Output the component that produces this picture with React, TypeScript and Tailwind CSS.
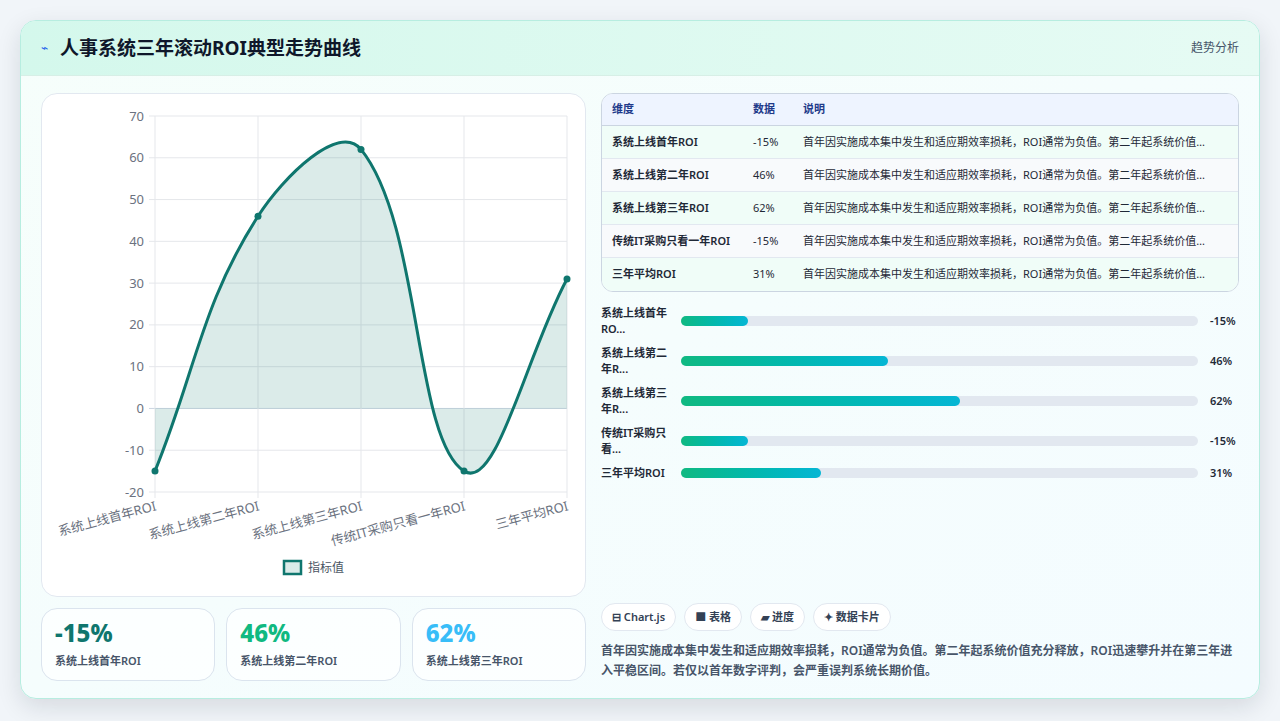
import React from "react";

const font = { fontFamily: '"Noto Sans", "Noto Sans CJK SC", sans-serif' };

const labels = ["系统上线首年ROI", "系统上线第二年ROI", "系统上线第三年ROI", "传统IT采购只看一年ROI", "三年平均ROI"];
const values = [-15, 46, 62, -15, 31];
const desc = "首年因实施成本集中发生和适应期效率损耗，ROI通常为负值。第二年起系统价值充分释放，ROI迅速攀升并在第三年进入平稳区间。";

const X0 = 153, X1 = 565, YT = 115, YB = 491;
const yOf = (v: number) => YT + ((70 - v) / 90) * (YB - YT);
const pts = values.map((v, i) => [X0 + (i * (X1 - X0)) / 4, yOf(v)]);

function curvePath() {
  const t = 0.4;
  const cps = pts.map((p, i) => {
    const prev = pts[i - 1] || p, next = pts[i + 1] || p;
    const d01 = Math.hypot(p[0] - prev[0], p[1] - prev[1]);
    const d12 = Math.hypot(next[0] - p[0], next[1] - p[1]);
    const s = d01 + d12 || 1;
    const fa = (t * d01) / s, fb = (t * d12) / s;
    return {
      prev: [p[0] - fa * (next[0] - prev[0]), p[1] - fa * (next[1] - prev[1])],
      next: [p[0] + fb * (next[0] - prev[0]), p[1] + fb * (next[1] - prev[1])],
    };
  });
  let d = `M${pts[0][0]},${pts[0][1]}`;
  for (let i = 1; i < pts.length; i++) {
    const a = cps[i - 1].next, b = cps[i].prev;
    d += ` C${a[0]},${a[1]} ${b[0]},${b[1]} ${pts[i][0]},${pts[i][1]}`;
  }
  return d;
}

function Chart() {
  const line = curvePath();
  const zero = yOf(0);
  const ticks = [70, 60, 50, 40, 30, 20, 10, 0, -10, -20];
  return (
    <svg viewBox="40 93 545 504" width="545" height="504" className="block" style={font}>
      {ticks.map((v) => (
        <g key={v}>
          <line x1={X0 - 6} x2={X1} y1={yOf(v)} y2={yOf(v)} stroke={v === 0 ? "#cbd5e1" : "#e5e7eb"} />
          <text x={X0 - 11} y={yOf(v) + 4.5} textAnchor="end" fontSize="13" fill="#6b7280">{v}</text>
        </g>
      ))}
      {pts.map((p, i) => (
        <line key={i} x1={p[0]} x2={p[0]} y1={YT} y2={YB + 6} stroke="#e5e7eb" />
      ))}
      <path d={`${line} L${X1},${zero} L${X0},${zero} Z`} fill="#0f766e" fillOpacity="0.15" />
      <path d={line} fill="none" stroke="#0f766e" strokeWidth="3" />
      {pts.map((p, i) => (
        <circle key={i} cx={p[0]} cy={p[1]} r="3.5" fill="#0f766e" />
      ))}
      {labels.map((l, i) => (
        <text key={l} x={pts[i][0] + 2} y={YB + 18} fontSize="13" fill="#6b7280" textAnchor="end"
          transform={`rotate(-15 ${pts[i][0] + 2} ${YB + 18})`}>{l}</text>
      ))}
      <rect x="282" y="560" width="17" height="13" fill="#0f766e" fillOpacity="0.15" stroke="#0f766e" strokeWidth="2.5" />
      <text x="306" y="571" fontSize="12" fill="#4b5563">指标值</text>
    </svg>
  );
}

export default function App() {
  const bars = [
    ["系统上线首年", "RO...", -15, 13],
    ["系统上线第二", "年R...", 46, 40],
    ["系统上线第三", "年R...", 62, 54],
    ["传统IT采购只", "看...", -15, 13],
    ["三年平均ROI", "", 31, 27],
  ] as const;
  return (
    <div className="min-h-screen w-full bg-[#f1f5f9] p-5" style={font}>
      <div className="h-[679px] rounded-2xl border border-[#b7ede0] bg-gradient-to-br from-[#f6fefb] to-[#f4fcff] shadow-[0_8px_24px_rgba(15,23,42,0.12)] overflow-hidden flex flex-col">
        <div className="h-[55px] shrink-0 flex items-center justify-between px-5 bg-gradient-to-r from-[#d4f8ec] to-[#e6fbf4] border-b border-[#d7efe6]">
          <div className="flex items-center gap-3">
            <span className="text-[#2563eb] text-xs">⌁</span>
            <h1 className="text-[19px] font-bold text-[#0f172a]">人事系统三年滚动ROI典型走势曲线</h1>
          </div>
          <span className="text-xs text-[#475569]">趋势分析</span>
        </div>
        <div className="flex-1 min-h-0 flex gap-[15px] px-5 pt-[17px] pb-[17px]">
          <div className="w-[545px] shrink-0 flex flex-col gap-[11px]">
            <div className="h-[504px] shrink-0 bg-white rounded-2xl border border-[#e2e8f0] overflow-hidden">
              <Chart />
            </div>
            <div className="flex gap-[11px] flex-1">
              {[
                ["-15%", "text-[#0f766e]"],
                ["46%", "text-[#10b981]"],
                ["62%", "text-[#38bdf8]"],
              ].map(([v, c], i) => (
                <div key={v} className="flex-1 min-w-0 rounded-2xl border border-[#dbe4ee] bg-white/70 px-[13px] pt-2">
                  <div className={`text-[24px] font-extrabold leading-8 ${c}`}>{v}</div>
                  <div className="text-[11px] font-semibold text-[#475569] mt-1 whitespace-nowrap">{labels[i]}</div>
                </div>
              ))}
            </div>
          </div>
          <div className="flex-1 min-w-0 flex flex-col">
            <div className="rounded-xl border border-[#cbd5e1] overflow-hidden bg-white text-[11px]">
              <div className="flex h-[32px] items-center bg-[#eef4ff] text-[#1e3a8a] font-semibold border-b border-[#cbd5e1]">
                <div className="w-[151px] shrink-0 pl-[10px]">维度</div>
                <div className="w-[50px] shrink-0">数据</div>
                <div className="flex-1">说明</div>
              </div>
              {labels.map((l, i) => (
                <div key={l} className={`flex h-[33px] items-center text-[#1f2937] ${i % 2 ? "bg-[#f8fafc]" : "bg-[#f0fdf8]"} ${i < 4 ? "border-b border-[#e2e8f0]" : ""}`}>
                  <div className="w-[151px] shrink-0 pl-[10px] font-semibold whitespace-nowrap">{l}</div>
                  <div className="w-[50px] shrink-0">{values[i]}%</div>
                  <div className="flex-1 min-w-0 truncate pr-6">{desc}</div>
                </div>
              ))}
            </div>
            <div className="mt-[13px] flex flex-col gap-[8px]">
              {bars.map(([a, b, v, w]) => (
                <div key={a} className="flex items-center gap-2 text-[11px] font-semibold text-[#1f2937]">
                  <div className="w-[72px] shrink-0 leading-[16px]">{a}{b && <br />}{b}</div>
                  <div className="flex-1 h-[10px] rounded-full bg-[#e2e8f0]">
                    <div className="h-full rounded-full bg-gradient-to-r from-[#10b981] to-[#06b6d4]" style={{ width: `${w}%` }} />
                  </div>
                  <div className="w-[33px] shrink-0 pl-1">{v}%</div>
                </div>
              ))}
            </div>
            <div className="flex-1" />
            <div className="flex gap-2 text-[11px] font-semibold text-[#334155]">
              {["⊟ Chart.js", "■ 表格", "▰ 进度", "✦ 数据卡片"].map((c) => (
                <span key={c} className="h-[28px] px-[10px] flex items-center rounded-full border border-[#e2e8f0] bg-white">{c}</span>
              ))}
            </div>
            <p className="mt-[10px] text-[12px] leading-[20px] font-semibold text-[#475569]">
              首年因实施成本集中发生和适应期效率损耗，ROI通常为负值。第二年起系统价值充分释放，ROI迅速攀升并在第三年进入平稳区间。若仅以首年数字评判，会严重误判系统长期价值。
            </p>
          </div>
        </div>
      </div>
    </div>
  );
}
